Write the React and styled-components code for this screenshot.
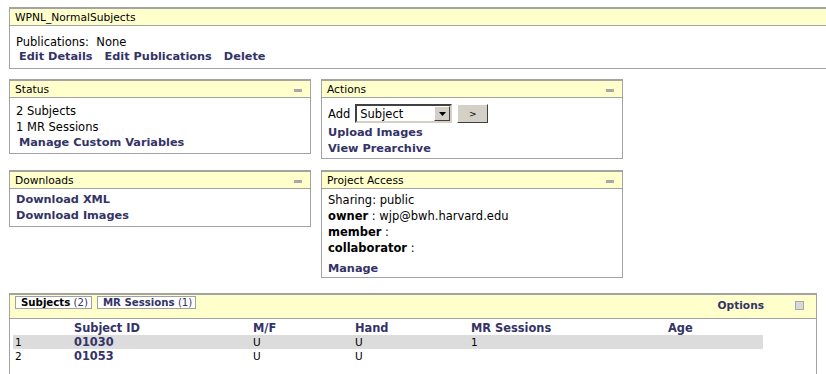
import React from 'react'
import styled, { createGlobalStyle } from 'styled-components'

const Global = createGlobalStyle`
html, body {
    margin: 0;
    padding: 0;
    overflow: hidden;
    background: #fff;
}
body {
    font-family: "DejaVu Sans", Verdana, sans-serif;
    font-size: 11.5px;
    color: #000;
}
`;

const Page = styled.div`
padding: 7px 0 0 9px;
width: 840px;
`;

const Panel = styled.div`
border: 1px solid #a3a3a3;
border-top-width: 2px;
background: #fff;
box-sizing: border-box;
`;

const Header = styled.div`
display: flex;
align-items: center;
justify-content: space-between;
height: ${({ tall }) => tall ? '23px' : '16px'};
padding: 0 8px 0 5px;
background: #ffffcc;
border-bottom: 1px solid #a3a3a3;
font-size: 10.7px;
`;

const Minimize = styled.span`
display: inline-block;
width: 8px;
height: 3px;
background: #a8a8a8;
margin-top: 3px;
`;

const Body = styled.div`
padding: ${({ pad }) => pad || '5px 6px 2px'};
line-height: 16px;
`;

const Line = styled.div`
line-height: ${({ lh }) => lh || '16px'};
margin-top: ${({ mt }) => mt || '0'};
`;

const Links = styled.div`
display: flex;
gap: 12px;
padding-left: ${({ indent }) => indent ? '3px' : '0'};
height: 14px;

a {
    line-height: 14px;
}
`;

const Link = styled.a`
font-weight: bold;
font-size: 11.3px;
color: #333366;
text-decoration: none;
display: ${({ block }) => block ? 'block' : 'inline'};
padding-left: ${({ indent }) => indent ? '3px' : '0'};
line-height: 16px;
`;

const Grid = styled.div`
display: grid;
grid-template-columns: 302px 302px;
column-gap: 10px;
row-gap: 11px;
align-items: start;
margin-top: 10px;
`;

const AddRow = styled.div`
display: flex;
align-items: center;
height: 19px;
margin-bottom: 2px;
`;

const Select = styled.div`
display: flex;
align-items: center;
justify-content: space-between;
box-sizing: border-box;
width: 97px;
height: 19px;
margin-left: 5px;
border: 2px solid;
border-color: #404040 #d4d0c8 #d4d0c8 #404040;
background: #fff;
padding-left: 3px;
`;

const SelectArrow = styled.span`
display: flex;
align-items: center;
justify-content: center;
width: 16px;
height: 15px;
background: #d4d0c8;
border: 1px solid;
border-color: #fff #404040 #404040 #fff;
box-sizing: border-box;
`;

const Button = styled.button`
width: 31px;
height: 19px;
margin-left: 5px;
padding: 0;
background: #d4d0c8;
border: 1px solid;
border-color: #fff #404040 #404040 #fff;
font-family: "DejaVu Sans", Verdana, sans-serif;
font-size: 9px;
color: #000;
`;

const Label = styled.b`
font-weight: bold;
`;

const Bottom = styled(Panel)`
margin-top: 15px;
width: 808px;
height: 120px;
`;

const Tabs = styled.div`
display: flex;
gap: 5px;
align-self: flex-start;
margin-top: 1px;
`;

const Tab = styled.span`
border: 1px solid #a0a0a0;
background: #fff;
padding: 0 3px 0 5px;
font-size: 10.2px;
line-height: 11px;
color: #333366;
b { font-weight: bold; color: ${({ active }) => active ? '#000' : '#333366'}; }
`;

const Opts = styled.div`
display: flex;
align-items: center;
gap: 31px;
align-self: flex-start;
margin-top: 4px;
`;

const Options = styled.span`
font-weight: bold;
font-size: 10.6px;
color: #333366;
`;

const CheckBox = styled.span`
width: 7px;
height: 7px;
border: 1px solid #a8a8a8;
background: #d8d8d8;
margin-right: 4px;
`;

const Table = styled.div`
margin: 2px 0 0 3px;
width: 750px;
`;

const Row = styled.div`
display: grid;
grid-template-columns: 59px 179px 102px 116px 197px 97px;
height: 14px;
line-height: 14px;
background: ${({ shade }) => shade ? '#dcdcdc' : 'transparent'};
`;

const Cell = styled.span`
padding-left: 2px;
font-size: ${({ strong }) => strong ? '11.4px' : '10.5px'};
font-weight: ${({ strong }) => strong ? 'bold' : 'normal'};
color: ${({ strong }) => strong ? '#333366' : '#000'};
white-space: nowrap;
`;

function Box({ title, children }) {
    return (
        <Panel>
            <Header>
                <span>{title}</span>
                <Minimize />
            </Header>
            {children}
        </Panel>
    )
}

const subjects = [
    { n: 1, id: '01030', mf: 'U', hand: 'U', mr: '1', age: '' },
    { n: 2, id: '01053', mf: 'U', hand: 'U', mr: '', age: '' },
];

export default function App() {
    return (
        <Page>
            <Global />
            <Panel>
                <Header>
                    <span>WPNL_NormalSubjects</span>
                </Header>
                <Body pad="8px 6px 4px">
                    <Line>Publications:&nbsp; None</Line>
                    <Links indent>
                        <Link>Edit Details</Link>
                        <Link>Edit Publications</Link>
                        <Link>Delete</Link>
                    </Links>
                </Body>
            </Panel>

            <Grid>
                <Box title="Status">
                    <Body>
                        <Line>2 Subjects</Line>
                        <Line>1 MR Sessions</Line>
                        <Link block indent>Manage Custom Variables</Link>
                    </Body>
                </Box>
                <Box title="Actions">
                    <Body pad="6px 6px 1px">
                        <AddRow>
                            <span>Add</span>
                            <Select>
                                <span>Subject</span>
                                <SelectArrow>
                                    <svg width="7" height="4" viewBox="0 0 7 4">
                                        <path d="M0 0h7L3.5 4z" fill="#000" />
                                    </svg>
                                </SelectArrow>
                            </Select>
                            <Button>&gt;</Button>
                        </AddRow>
                        <Link block>Upload Images</Link>
                        <Link block>View Prearchive</Link>
                    </Body>
                </Box>
                <Box title="Downloads">
                    <Body pad="3px 6px 2px">
                        <Link block>Download XML</Link>
                        <Link block>Download Images</Link>
                    </Body>
                </Box>
                <Box title="Project Access">
                    <Body pad="3px 6px 0">
                        <Line>Sharing: public</Line>
                        <Line><Label>owner</Label> : wjp@bwh.harvard.edu</Line>
                        <Line><Label>member</Label> :</Line>
                        <Line><Label>collaborator</Label> :</Line>
                        <Line mt="4px"><Link>Manage</Link></Line>
                    </Body>
                </Box>
            </Grid>

            <Bottom>
                <Header tall>
                    <Tabs>
                        <Tab active><b>Subjects</b> (2)</Tab>
                        <Tab><b>MR Sessions</b> (1)</Tab>
                    </Tabs>
                    <Opts>
                        <Options>Options</Options>
                        <CheckBox />
                    </Opts>
                </Header>
                <Table>
                    <Row>
                        <Cell />
                        <Cell strong>Subject ID</Cell>
                        <Cell strong>M/F</Cell>
                        <Cell strong>Hand</Cell>
                        <Cell strong>MR Sessions</Cell>
                        <Cell strong>Age</Cell>
                    </Row>
                    {subjects.map((s, i) => (
                        <Row key={s.n} shade={i % 2 === 0}>
                            <Cell>{s.n}</Cell>
                            <Cell strong>{s.id}</Cell>
                            <Cell>{s.mf}</Cell>
                            <Cell>{s.hand}</Cell>
                            <Cell>{s.mr}</Cell>
                            <Cell>{s.age}</Cell>
                        </Row>
                    ))}
                </Table>
            </Bottom>
        </Page>
    )
}
